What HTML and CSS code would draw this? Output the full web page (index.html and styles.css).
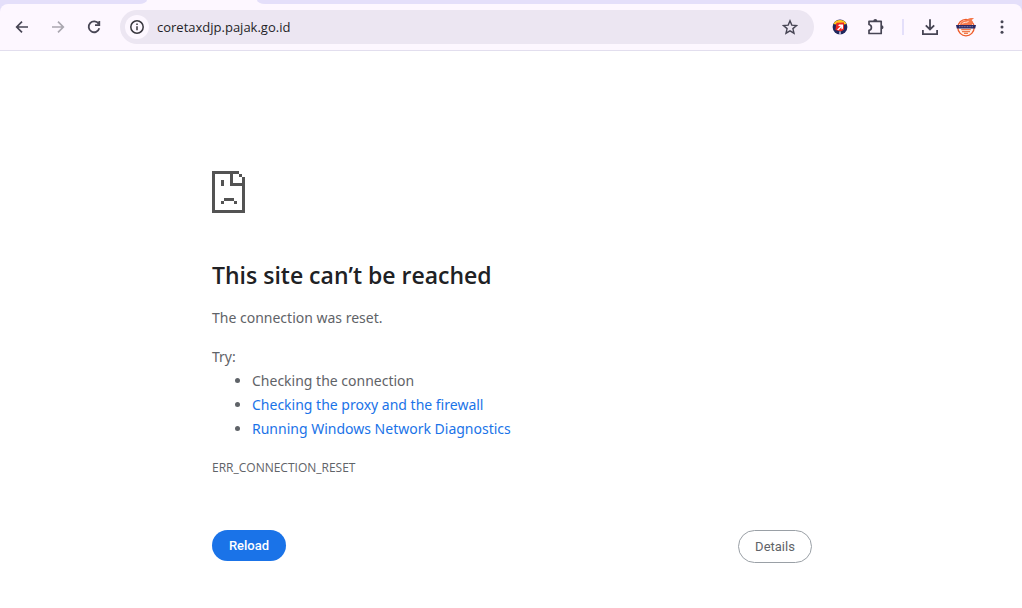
FILE: index.html
```html
<!DOCTYPE html>
<html lang="en">
<head>
<meta charset="utf-8">
<title>coretaxdjp.pajak.go.id</title>
<link rel="stylesheet" href="styles.css">
</head>
<body>
<header class="browser">
  <div class="tabstrip"><div class="tab-edge tab-left"></div><div class="tab-active"></div><div class="tab-edge tab-right"></div></div>
  <div class="toolbar">
    <nav class="nav">
      <button class="icon-btn" aria-label="Back"><svg width="16" height="16" viewBox="0 0 16 16"><path d="M14 8H3M8 2.7 2.7 8 8 13.3" fill="none" stroke="#474554" stroke-width="1.7"/></svg></button>
      <button class="icon-btn" aria-label="Forward" disabled><svg width="16" height="16" viewBox="0 0 16 16"><path d="M2 8h11M8 2.7 13.3 8 8 13.3" fill="none" stroke="#aaa7b0" stroke-width="1.7"/></svg></button>
      <button class="icon-btn" aria-label="Reload page"><svg width="16" height="16" viewBox="0 0 16 16"><path d="M12.6 4.8A5.4 5.4 0 1 0 13.3 9.3M13.3 2v4.2H9" fill="none" stroke="#474554" stroke-width="1.8"/></svg></button>
    </nav>
    <div class="omnibox">
      <button class="site-info" aria-label="Site information"><svg width="16" height="16" viewBox="0 0 16 16"><circle cx="8" cy="8" r="6.2" fill="none" stroke="#37353d" stroke-width="1.5"/><path d="M8 7.2v4M8 4.4V6" stroke="#37353d" stroke-width="1.5"/></svg></button>
      <input class="url" type="text" aria-label="Address" value="coretaxdjp.pajak.go.id">
      <button class="icon-btn" aria-label="Bookmark"><svg width="16" height="16" viewBox="0 0 16 16"><path d="m8 1.8 1.8 4.3 4.7.4-3.6 3.1 1.1 4.6L8 11.8l-4 2.4 1.1-4.6-3.6-3.1 4.7-.4z" fill="none" stroke="#474554" stroke-width="1.4"/></svg></button>
    </div>
    <div class="actions">
      <button class="icon-btn" aria-label="Extension"><svg width="16" height="16" viewBox="0 0 16 16"><circle cx="8" cy="8" r="7.4" fill="#20285f"/><path d="M1.4 5A7.4 7.4 0 0 1 14.6 5L12 5.6H4z" fill="#ffc91f"/><path d="M4.4 3.8 12 3.4v7.3L8.8 12.4 3.4 11z" fill="#ee2722"/><path d="m5 10.8 3.6-3.6-2.4-.2.8-1.6h4v4.1l-1.5 1-.1-2.3-2.9 3.1z" fill="#fff"/><path d="M8 12.6v3.2" stroke="#e8e5f4" stroke-width="1.3"/></svg></button>
      <button class="icon-btn" aria-label="Extensions"><svg width="18" height="18" viewBox="0 0 18 18"><path d="M2 3.3h12.2v12.2H2v-3.2c3.2-.6 3.2-5.2 0-5.8z" fill="none" stroke="#474554" stroke-width="1.7" stroke-linejoin="round"/><path d="M6.3 3a2 2 0 0 1 4 0zM14.5 7.2a2 2 0 0 1 0 4z" fill="#474554"/></svg></button>
      <span class="separator"></span>
      <button class="icon-btn" aria-label="Downloads"><svg width="18" height="18" viewBox="0 0 18 18"><path d="M9 1.2v10M4.8 7.3 9 11.5l4.2-4.2M1.9 12v4.2h14.2V12" fill="none" stroke="#474554" stroke-width="1.8"/></svg></button>
      <button class="icon-btn" aria-label="Profile"><svg width="20" height="20" viewBox="0 0 20 20"><circle cx="10" cy="10.6" r="8.2" fill="#fff3ed" stroke="#ee5a2a" stroke-width="1.3"/><path d="M4 8C4.4 4 8 3.8 11 2.4 13.6 1 16 .8 18 1.2L15.7 3l1.2 2-1 3z" fill="#f5794c"/><path d="M6.4 6.5c2-1.8 4-.4 6.2-2.2" fill="none" stroke="#fff0e6" stroke-width=".9"/><path d="M5.2 12.6h9.6M6 14.6h8M8 16.4h4" fill="none" stroke="#f07a4c" stroke-width="1.2"/><path d="M0 8h20l-.8 3.4H.8z" fill="#282764"/><path d="M3 9.7h14" stroke="#8b83a8" stroke-width="1" stroke-dasharray="1 .6"/></svg></button>
      <button class="icon-btn" aria-label="Menu"><svg width="16" height="16" viewBox="0 0 16 16" fill="#474554"><circle cx="8" cy="2.7" r="1.5"/><circle cx="8" cy="8" r="1.5"/><circle cx="8" cy="13.3" r="1.5"/></svg></button>
    </div>
  </div>
</header>
<main class="page">
  <div class="content">
    <svg class="sad" width="33" height="42" viewBox="0 0 33 42" fill="#535353" shape-rendering="crispEdges" aria-hidden="true"><path d="M0 0h27v3H0zM0 0h3v42H0zM0 39h33v3H0zM30 6h3v36h-3zM27 3h3v3h-3zM18 0h3v15h-3zM18 12h15v3H18zM9 9h3v6H9zM12 27h10v3H12zM9 30h3v3H9zM22 30h3v3h-3z"/></svg>
    <h1>This site can’t be reached</h1>
    <p class="summary">The connection was reset.</p>
    <p class="try">Try:</p>
    <ul>
      <li>Checking the connection</li>
      <li><a href="#proxy">Checking the proxy and the firewall</a></li>
      <li><a href="#diagnostics">Running Windows Network Diagnostics</a></li>
    </ul>
    <p class="code">ERR_CONNECTION_RESET</p>
    <div class="buttons">
      <button class="btn primary">Reload</button>
      <button class="btn secondary">Details</button>
    </div>
  </div>
</main>
</body>
</html>
```
FILE: styles.css
```css
* { box-sizing: border-box; }
body {
  margin: 0;
  background: #fff;
  color: #5f6368;
  font: 14px/24px "Noto Sans", "Open Sans", sans-serif;
}
button { font: inherit; border: 0; padding: 0; cursor: pointer; }
.browser { background: #e4dffa; border-bottom: 1px solid #e2deee; }
.tabstrip {
  display: flex;
  height: 4px;
  background: linear-gradient(#fdf7ff, #fdf7ff) 130px 0 / 140px 4px no-repeat;
}
.tab-edge { background: #e4dffa; }
.tab-left { width: 147px; border-bottom-right-radius: 8px 4px; }
.tab-active { width: 110px; }
.tab-right { flex: 1; border-bottom-left-radius: 8px 4px; }
.toolbar {
  display: flex;
  align-items: center;
  height: 46px;
  padding: 0 6px 0 8px;
  background: #fdf7ff;
  border-radius: 8px 8px 0 0;
}
.nav { display: flex; gap: 8px; margin-right: 12px; }
.icon-btn {
  display: grid;
  place-items: center;
  width: 28px;
  height: 28px;
  background: none;
  border-radius: 50%;
}
.omnibox {
  display: flex;
  align-items: center;
  flex: 1;
  height: 34px;
  padding: 0 10px 0 5px;
  border-radius: 17px;
  background: #ece6f2;
}
.site-info {
  display: grid;
  place-items: center;
  width: 24px;
  height: 24px;
  border-radius: 50%;
  background: #fdf7ff;
}
.url {
  flex: 1;
  min-width: 0;
  height: 24px;
  padding: 0 8px;
  border: 0;
  outline: 0;
  background: none;
  color: #1f1f27;
  font: 13px/24px "Open Sans", "Noto Sans", sans-serif;
}
.actions { display: flex; align-items: center; gap: 8px; margin-left: 12px; }
.separator { width: 2px; height: 16px; margin: 0 4px; background: #e4dffa; }
.page { padding: 120px 0 40px 2px; }
.content { max-width: 600px; margin: 0 auto; }
.sad { display: block; }
h1 {
  margin: 48px 0 16px;
  color: #202124;
  font-family: "Open Sans", "Noto Sans", sans-serif;
  font-size: 23px;
  font-weight: 600;
  line-height: 29px;
}
p { margin: 0; }
.summary { margin-bottom: 15px; }
ul { margin: 0; padding-left: 40px; }
a { color: #1a73e8; text-decoration: none; }
.code { margin-top: 15px; font-family: "Open Sans", "Noto Sans", sans-serif; font-size: 12px; }
.buttons { display: flex; justify-content: space-between; align-items: flex-start; margin-top: 50px; }
.btn {
  min-width: 74px;
  padding: 8px 16px;
  border-radius: 20px;
  font: 500 13px/15px Roboto, sans-serif;
}
.primary { background: #1a73e8; color: #fff; }
.secondary { background: #fff; color: #5f6368; border: 1px solid #9aa0a6; font-weight: 400; }
```
